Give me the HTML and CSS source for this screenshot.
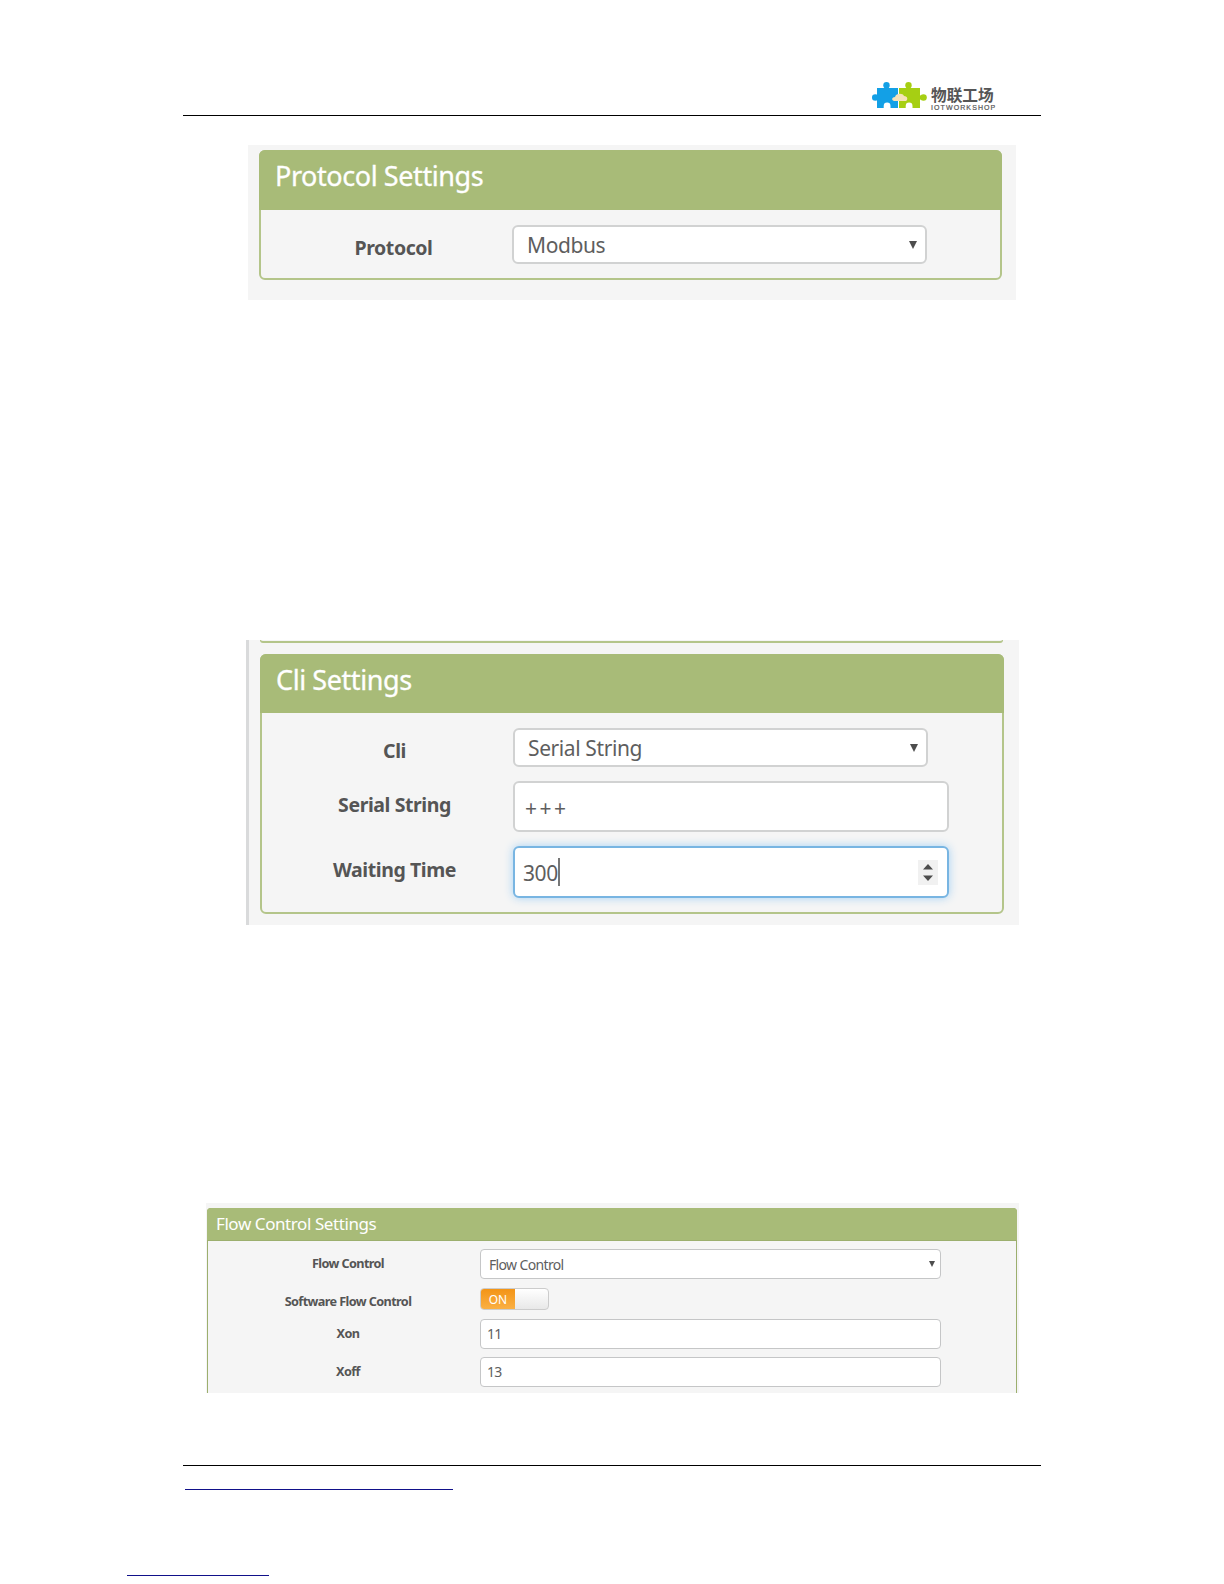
FILE: index.html
```html
<!DOCTYPE html>
<html lang="en">
<head>
<meta charset="utf-8">
<title>Settings manual</title>
<link rel="stylesheet" href="styles.css">
</head>
<body>
<header class="page-header">
  <svg class="puzzle" width="56" height="28" viewBox="0 0 56 28">
    <g fill="#a6cf13">
      <path d="M27 6h7.500V3h4v3H48v7.500h3v4h-3V26h-7.500v-2a3.400 3.400 0 0 0-6.800 0v2H27z"/>
      <circle cx="36.500" cy="3.200" r="3.200"/><circle cx="51.500" cy="15.500" r="3.300"/>
    </g>
    <g fill="#13a0e6">
      <path d="M5 6h7.500V3h4v3H26v7h-2v5h2v8h-7.500v-2a3.400 3.400 0 0 0-6.800 0v2H5v-8.500H2v-4h3z"/>
      <circle cx="14.500" cy="3.200" r="3.200"/><circle cx="3.300" cy="15.500" r="3.300"/>
    </g>
    <path fill="#f5e3b9" d="M22 19c-3-1-2-4 1-4 1-4 8-4 9-1 4 0 4 4 2 5z"/>
  </svg>
  <div class="brand"><span class="brand-cn">物联工场</span><span class="brand-en">IOTWORKSHOP</span></div>
</header>

<main>
<section class="figure protocol">
  <div class="panel">
    <h2>Protocol Settings</h2>
    <div class="row">
      <label class="low">Protocol</label>
      <div class="field select"><span>Modbus</span><svg width="8" height="8"><path d="M0 0h8L4 8z"/></svg></div>
    </div>
  </div>
</section>

<section class="figure cli">
  <div class="previous"></div>
  <div class="panel">
    <h2>Cli Settings</h2>
    <div class="row">
      <label class="low">Cli</label>
      <div class="field select"><span>Serial String</span><svg width="8" height="8"><path d="M0 0h8L4 8z"/></svg></div>
    </div>
    <div class="row text-row">
      <label>Serial String</label>
      <div class="field"><span class="plus">+++</span></div>
    </div>
    <div class="row text-row">
      <label>Waiting Time</label>
      <div class="field focused"><span>300</span><i class="caret"></i>
        <svg class="spinner" width="20" height="25"><path d="M5 9.500L10 4l5 5.500zM5 15.500h10L10 21z"/></svg>
      </div>
    </div>
  </div>
</section>

<section class="figure flow">
  <div class="panel">
    <h2>Flow Control Settings</h2>
    <div class="row select-row">
      <label>Flow Control</label>
      <div class="field select"><span>Flow Control</span><svg width="6" height="6"><path d="M0 0h6L3 6z"/></svg></div>
    </div>
    <div class="row switch-row">
      <label>Software Flow Control</label>
      <div class="switch"><span>ON</span></div>
    </div>
    <div class="row xon-row">
      <label>Xon</label>
      <div class="field"><span>11</span></div>
    </div>
    <div class="row xoff-row">
      <label>Xoff</label>
      <div class="field"><span>13</span></div>
    </div>
  </div>
</section>
</main>

<footer>
  <div class="rule"></div>
  <div class="link-line"></div>
  <div class="link-line outer"></div>
</footer>
</body>
</html>
```
FILE: styles.css
```css
* { box-sizing: border-box; }
body {
  margin: 0;
  height: 1584px;
  overflow: hidden;
  background: #fff;
  color: #5e5e5e;
  font-family: "Noto Sans", "Open Sans", sans-serif;
}
.page-header {
  display: flex;
  width: 858px;
  height: 116px;
  margin-left: 183px;
  padding: 82px 0 0 689px;
  border-bottom: 1px solid #000;
}
.puzzle { flex: none; margin-right: 3px; }
.brand { display: flex; flex-direction: column; padding-top: 4px; color: #555; }
.brand-cn {
  height: 18px;
  font: bold 15.7px/18px "Noto Sans CJK SC", sans-serif;
  white-space: nowrap;
}
.brand-en { font: 7px/7px "Liberation Sans", sans-serif; letter-spacing: 1.1px; -webkit-text-stroke: 0.2px #555; }

.figure { background: #f5f5f5; }
.panel { border: 2px solid #b4c58a; border-radius: 6px; }
h2 {
  margin: -2px -2px 0;
  height: 60px;
  padding-left: 16px;
  border-radius: 6px 6px 0 0;
  background: #a8bb78;
  color: #fff;
  font-size: 27px;
  font-weight: 400;
  letter-spacing: -0.42px;
  line-height: 52px;
  white-space: nowrap;
  -webkit-text-stroke: 0.3px #fff;
}
.row {
  display: grid;
  grid-template-columns: 237px 1fr;
  padding-left: 14px;
}
label {
  color: #555;
  font-size: 19.5px;
  font-weight: 700;
  letter-spacing: -0.42px;
  line-height: 43px;
  text-align: center;
  white-space: nowrap;
}
.low { padding-top: 1px; }
.field {
  display: flex;
  align-items: center;
  width: 436px;
  height: 51px;
  padding-left: 10px;
  border: 2px solid #d1d2d2;
  border-radius: 6px;
  background: #fff;
  font-size: 21px;
  letter-spacing: -0.4px;
  line-height: 30px;
  white-space: nowrap;
}
.field.select { width: 415px; height: 39px; padding: 0 8px 0 13px; justify-content: space-between; }
.field svg { fill: #4d4d4d; }
.plus { padding-top: 2px; letter-spacing: 2.5px; }

.protocol { width: 768px; height: 155px; margin: 29px 0 0 248px; padding: 5px 0 0 11px; }
.protocol .panel { width: 743px; height: 130px; }
.protocol .row { padding-top: 15px; }

.cli {
  width: 773px;
  height: 285px;
  margin: 340px 0 0 246px;
  padding-left: 12px;
  border-left: 3px solid #d9dadb;
}
.cli > div { margin-left: -1px; }
.previous { width: 743px; height: 3px; border: solid #b4c58a; border-width: 0 1px 2px; border-radius: 0 0 5px 5px; }
.cli .panel { width: 744px; height: 260px; margin-top: 11px; }
.cli h2 { height: 59px; line-height: 51px; }
.cli .row { padding: 15px 0 0 14px; }
.cli .row.text-row { padding-top: 9px; }
.cli .text-row label { line-height: 47px; }
.cli .row.text-row:last-child { padding-top: 14px; }
.cli .focused {
  height: 52px;
  padding-left: 8px;
  border-color: #78b5e2;
  box-shadow: 0 0 10px #a5d1f3;
}
.focused span { padding-top: 1px; }
.caret { width: 2px; height: 28px; background: #777; }
.spinner { margin-left: auto; margin-right: 9px; background: #f1f1f1; }

.flow { width: 813px; height: 190px; margin: 278px 0 0 206px; padding: 5px 0 0 1px; }
.flow .panel {
  width: 810px;
  height: 185px;
  border-width: 1px 1px 0;
  border-color: #9caf6e;
  border-radius: 4px 4px 0 0;
}
.flow h2 { height: 33px; margin: -1px -1px 0; padding-left: 9px; border-bottom: 1px solid #9caf6e; border-radius: 4px 4px 0 0; font-size: 17px; line-height: 31px; -webkit-text-stroke: 0; }
.flow .row { grid-template-columns: 264px 1fr; padding-left: 8px; }
.flow label { font-size: 12.7px; letter-spacing: -0.62px; line-height: 28px; }
.flow .field { width: 461px; height: 30px; padding-left: 6px; border: 1px solid #c5c6c7; border-radius: 4px; font-size: 14px; line-height: 20px; }
.flow .field span { letter-spacing: -0.65px; }
.flow .select { padding: 0 5px 0 8px; }
.flow .select span { padding-top: 1px; }
.flow .select-row { padding-top: 8px; }
.flow .switch-row { padding-top: 9px; }
.flow .switch-row label { height: 22px; line-height: 27px; }
.flow .xon-row { padding-top: 9px; }
.flow .xoff-row { padding-top: 8px; }
.switch {
  width: 69px;
  height: 22px;
  border: 1px solid #ccc;
  border-radius: 4px;
  overflow: hidden;
  background: linear-gradient(#fff, #e8e8e8);
}
.switch span {
  display: block;
  width: 34px;
  height: 20px;
  background: linear-gradient(#f39416, #fab044);
  color: #fff;
  font-size: 12px;
  line-height: 21px;
  text-align: center;
}

footer { margin-top: 72px; }
.rule { width: 858px; height: 1px; margin-left: 183px; background: #000; }
.link-line { width: 268px; height: 1px; margin: 23px 0 0 185px; background: #11118a; }
.link-line.outer { width: 142px; margin: 85px 0 0 127px; }
```
